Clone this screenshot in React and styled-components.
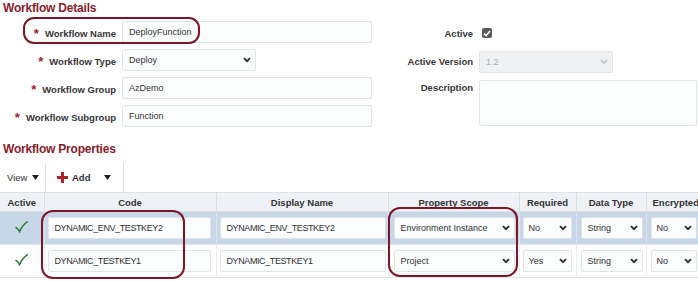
import React from "react";
import styled, { createGlobalStyle } from "styled-components";

const FONT = `"Liberation Sans", Arial, sans-serif`;

const GlobalStyle = createGlobalStyle`
  html, body { margin: 0; padding: 0; overflow: hidden; background: #ffffff; }
  body { font-family: ${FONT}; color: #333; }
`;

const Root = styled.div`
  position: relative;
  width: 698px;
  height: 281px;
  overflow: hidden;
  background: #fff;
`;

const SectionTitle = styled.h2`
  margin: ${(p) => p.$mt || 0}px 0 0 0;
  padding: 0 0 0 3px;
  height: 16px;
  line-height: 16px;
  font-size: 12px;
  font-weight: 700;
  color: #8a1c2c;
  letter-spacing: -0.2px;
`;

const Details = styled.div`
  display: flex;
  margin-top: 5px;
`;

const FormGrid = styled.div`
  display: grid;
  grid-template-columns: ${(p) => p.$labelW}px ${(p) => p.$ctrlW}px;
  grid-auto-rows: auto;
  column-gap: 6px;
  row-gap: ${(p) => p.$rowGap}px;
  margin-left: ${(p) => p.$ml || 0}px;
  align-items: center;
`;

const Label = styled.div`
  text-align: right;
  font-size: 9.5px;
  font-weight: 700;
  color: #363636;
  white-space: nowrap;
  align-self: ${(p) => (p.$top ? "start" : "center")};
  padding-top: ${(p) => (p.$top ? 4 : 0)}px;
`;

const Req = styled.span`
  color: #a3202f;
  font-size: 13px;
  font-weight: 700;
  margin-right: 6px;
  position: relative;
  top: 1px;
`;

const Field = styled.div`
  box-sizing: border-box;
  height: ${(p) => p.$h || 22}px;
  width: ${(p) => (p.$w ? `${p.$w}px` : "100%")};
  border: 1px solid #e2e5e8;
  border-radius: 2px;
  background: ${(p) => (p.$disabled ? "#f0f1f2" : "#fbfcfc")};
  color: ${(p) => (p.$disabled ? "#a9adb1" : "#333")};
  font-size: 9px;
  display: flex;
  align-items: center;
  justify-content: space-between;
  padding: 0 ${(p) => p.$pr ?? 4}px 0 ${(p) => p.$pl ?? 6}px;
  white-space: nowrap;
  overflow: hidden;
  letter-spacing: ${(p) => p.$ls || 0}px;
`;

const CheckCell = styled.div`
  height: 22px;
  display: flex;
  align-items: center;
  padding-left: 3px;
`;

const CheckBox = styled.div`
  width: 10px;
  height: 10px;
  border-radius: 2px;
  background: #5a5a5a;
  display: flex;
  align-items: center;
  justify-content: center;
`;

const Chevron = ({ disabled }) => (
  <svg width="8" height="6" viewBox="0 0 8 6">
    <path
      d="M1 1.2 L4 4.2 L7 1.2"
      fill="none"
      stroke={disabled ? "#c4c7ca" : "#2b2b2b"}
      strokeWidth="1.8"
    />
  </svg>
);

const Select = ({ value, w, disabled, pl }) => (
  <Field $w={w} $disabled={disabled} $pl={pl}>
    <span>{value}</span>
    <Chevron disabled={disabled} />
  </Field>
);

const Toolbar = styled.div`
  display: flex;
  align-items: stretch;
  height: 29px;
  margin-top: 6px;
`;

const ToolGroup = styled.div`
  display: flex;
  align-items: center;
  box-sizing: border-box;
  width: ${(p) => p.$w}px;
  padding-left: ${(p) => p.$pl}px;
  border-right: 1px solid #dfe3e7;
  font-size: 9.5px;
  color: #333;
  font-weight: ${(p) => (p.$bold ? 700 : 400)};
`;

const Tri = styled.svg`
  margin-left: ${(p) => p.$ml}px;
`;

const TriangleDown = ({ ml }) => (
  <Tri $ml={ml} width="7" height="5" viewBox="0 0 7 5">
    <path d="M0 0 H7 L3.5 5 Z" fill="#1e1e1e" />
  </Tri>
);

const PlusIcon = styled.svg`
  margin-right: 4px;
`;

const Plus = () => (
  <PlusIcon width="11" height="11" viewBox="0 0 11 11">
    <path d="M4 0 H7 V4 H11 V7 H7 V11 H4 V7 H0 V4 H4 Z" fill="#b0212f" />
  </PlusIcon>
);

const TableWrap = styled.div`
  width: 698px;
  overflow: hidden;
`;

const Table = styled.table`
  border-collapse: collapse;
  table-layout: fixed;
  width: 705px;
  border-top: 1px solid #dde2e7;
`;

const Col = styled.col`
  width: ${(p) => p.$w}px;
`;

const Th = styled.th`
  height: 18px;
  padding: 0 ${(p) => (p.$left ? "0 0 5px" : "0")};
  padding-left: ${(p) => (p.$left ? 6 : 0)}px;
  background: #eef1f5;
  font-size: 9.5px;
  font-weight: 700;
  color: #333;
  text-align: ${(p) => (p.$left ? "left" : "center")};
  border-right: 1px solid #d8dee5;
  border-bottom: 1px solid #dde2e7;
  white-space: nowrap;
  overflow: hidden;
`;

const Tr = styled.tr`
  background: ${(p) => (p.$selected ? "#c7d7e7" : "#ffffff")};
`;

const Td = styled.td`
  height: 32px;
  padding: 0 ${(p) => p.$pr ?? 4}px 0 ${(p) => p.$pl ?? 4}px;
  border-right: 1px solid ${(p) => (p.$selected ? "#dbe5ef" : "#eceff2")};
  border-bottom: 1px solid #e1e5e9;
  text-align: ${(p) => (p.$center ? "center" : "left")};
  vertical-align: middle;
`;

const Tick = () => (
  <svg width="13" height="12" viewBox="0 0 13 12">
    <path
      d="M1 6.5 C2.5 7.2 3.6 8.6 4.6 10.6 C6.3 6.6 8.8 3.2 12.2 0.8"
      fill="none"
      stroke="#2f7a34"
      strokeWidth="1.5"
      strokeLinecap="round"
    />
  </svg>
);

const Annotation = styled.div`
  position: absolute;
  left: ${(p) => p.$x}px;
  top: ${(p) => p.$y}px;
  width: ${(p) => p.$w}px;
  height: ${(p) => p.$h}px;
  box-sizing: border-box;
  border: 2px solid #7f1526;
  border-radius: ${(p) => p.$r}px;
  pointer-events: none;
`;

const rows = [
  {
    selected: true,
    code: "DYNAMIC_ENV_TESTKEY2",
    name: "DYNAMIC_ENV_TESTKEY2",
    scope: "Environment Instance",
    required: "No",
    type: "String",
    enc: "No",
  },
  {
    selected: false,
    code: "DYNAMIC_TESTKEY1",
    name: "DYNAMIC_TESTKEY1",
    scope: "Project",
    required: "Yes",
    type: "String",
    enc: "No",
  },
];

export default function App() {
  return (
    <Root>
      <GlobalStyle />
      <SectionTitle>Workflow Details</SectionTitle>
      <Details>
        <FormGrid $labelW={116} $ctrlW={250} $rowGap={6}>
          <Label>
            <Req>*</Req>Workflow Name
          </Label>
          <Field>DeployFunction</Field>
          <Label>
            <Req>*</Req>Workflow Type
          </Label>
          <Select value="Deploy" w={134} />
          <Label>
            <Req>*</Req>Workflow Group
          </Label>
          <Field>AzDemo</Field>
          <Label>
            <Req>*</Req>Workflow Subgroup
          </Label>
          <Field>Function</Field>
        </FormGrid>
        <FormGrid $labelW={93} $ctrlW={218} $rowGap={4} $ml={8}>
          <Label>Active</Label>
          <CheckCell>
            <CheckBox>
              <svg width="8" height="7" viewBox="0 0 8 7">
                <path d="M1 3.6 L3.1 5.6 L7 1" fill="none" stroke="#fff" strokeWidth="1.6" />
              </svg>
            </CheckBox>
          </CheckCell>
          <Label>Active Version</Label>
          <Select value="1.2" w={134} disabled />
          <Label $top>Description</Label>
          <Field $h={46} />
        </FormGrid>
      </Details>
      <SectionTitle $mt={14}>Workflow Properties</SectionTitle>
      <Toolbar>
        <ToolGroup $w={46} $pl={7}>
          View
          <TriangleDown ml={5} />
        </ToolGroup>
        <ToolGroup $w={78} $pl={11} $bold>
          <Plus />
          Add
          <TriangleDown ml={14} />
        </ToolGroup>
      </Toolbar>
      <TableWrap>
        <Table>
          <colgroup>
            <Col $w={44} />
            <Col $w={172} />
            <Col $w={172} />
            <Col $w={131} />
            <Col $w={57} />
            <Col $w={70} />
            <Col $w={59} />
          </colgroup>
          <thead>
            <tr>
              <Th>Active</Th>
              <Th>Code</Th>
              <Th>Display Name</Th>
              <Th>Property Scope</Th>
              <Th>Required</Th>
              <Th>Data Type</Th>
              <Th $left>Encrypted</Th>
            </tr>
          </thead>
          <tbody>
            {rows.map((r) => (
              <Tr key={r.code} $selected={r.selected}>
                <Td $center $selected={r.selected}>
                  <Tick />
                </Td>
                <Td $selected={r.selected} $pl={3} $pr={5}>
                  <Field $ls={-0.4}>{r.code}</Field>
                </Td>
                <Td $selected={r.selected} $pl={3} $pr={2}>
                  <Field $ls={-0.4}>{r.name}</Field>
                </Td>
                <Td $selected={r.selected} $pl={5} $pr={4}>
                  <Select value={r.scope} />
                </Td>
                <Td $selected={r.selected} $pl={3} $pr={4}>
                  <Select value={r.required} pl={5} />
                </Td>
                <Td $selected={r.selected} $pl={4} $pr={3}>
                  <Select value={r.type} />
                </Td>
                <Td $selected={r.selected} $pl={4} $pr={8}>
                  <Select value={r.enc} pl={5} />
                </Td>
              </Tr>
            ))}
          </tbody>
        </Table>
      </TableWrap>
      <Annotation $x={23} $y={17} $w={177} $h={27} $r={11} />
      <Annotation $x={41} $y={210} $w={144} $h={69} $r={12} />
      <Annotation $x={388} $y={207} $w={130} $h={70} $r={12} />
    </Root>
  );
}
